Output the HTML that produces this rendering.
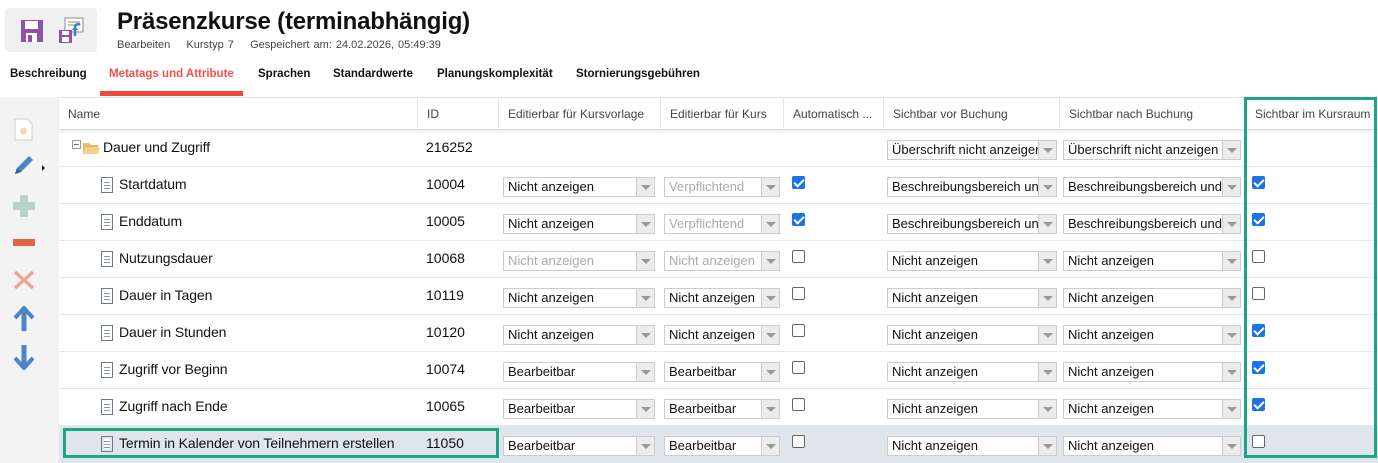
<!DOCTYPE html>
<html><head><meta charset="utf-8"><style>
*{box-sizing:border-box;margin:0;padding:0}
body{width:1378px;height:463px;overflow:hidden;background:#fff;font-family:"Liberation Sans",Arial,sans-serif;color:#111;position:relative}
.a{position:absolute}
.tb{top:8px;left:5px;width:92px;height:44px;background:#f0f0f0;border-radius:4px}
h1{position:absolute;left:117px;top:8px;font-size:24px;font-weight:bold;letter-spacing:-0.2px}
.sub{left:117px;top:39px;font-size:11px;color:#444;word-spacing:1px}
.tab{top:68px;font-size:11.5px;font-weight:bold}
.side{left:0;top:97px;width:59px;height:366px;background:#f3f3f3}
.hdr{top:97px;left:59px;width:1319px;height:33px;border-top:1px solid #e2e2e2;border-bottom:1px solid #ddd;box-shadow:0 2px 3px rgba(0,0,0,.08)}
.hc{position:absolute;top:0;height:32px;line-height:32px;font-size:12px;color:#444;padding-left:9px;border-left:1px solid #e6e6e6}
.row{left:59px;width:1319px;height:37px;border-bottom:1px solid #e8e8e8}
.nm{position:absolute;font-size:14px;top:9px;letter-spacing:-0.1px}
.id{position:absolute;left:367px;top:9px;font-size:14px}
.sel{position:absolute;top:10px;height:20px;border:1px solid #ccc;background:#fff;font-size:13px;line-height:18px;padding-left:4px;white-space:nowrap;overflow:hidden}
.sel i{position:absolute;right:0;top:0;width:18px;height:18px;background:#ececec;border-left:1px solid #ccc}
.sel i:after{content:"";position:absolute;left:4px;top:7px;border-left:5px solid transparent;border-right:5px solid transparent;border-top:5px solid #999}
.dis{color:#aaa}
.cb{position:absolute;top:9px;width:13px;height:13px;border:1px solid #666;border-radius:2px;background:#fff}
.cb.on{background:#1a73e8;border-color:#1a73e8}
.cb.on:after{content:"";position:absolute;left:3px;top:0px;width:4px;height:8px;border:solid #fff;border-width:0 2px 2px 0;transform:rotate(45deg)}
.doc{position:absolute;top:10px;width:12px;height:16px;border:1px solid #6b7a90;background:#fff repeating-linear-gradient(#fff 0 2px,#8a97b0 2px 3px) content-box;padding:2px 2px 2px 2px}
</style></head><body>
<div class="a tb"></div>
<svg class="a" style="left:20px;top:19px" width="24" height="24"><rect x="1" y="1" width="22" height="22" fill="#8e52a8"/><rect x="5" y="2" width="13" height="8" fill="#fff"/><rect x="6" y="14" width="11" height="9" fill="#fff"/><rect x="8" y="16" width="4" height="7" fill="#8e52a8"/></svg>
<svg class="a" style="left:58px;top:16px" width="28" height="28"><rect x="7" y="2" width="18" height="14" fill="#fff" stroke="#888"/><line x1="10" y1="6" x2="22" y2="6" stroke="#888"/><line x1="10" y1="9" x2="22" y2="9" stroke="#888"/><rect x="1" y="14" width="13" height="13" fill="#8e52a8"/><rect x="4" y="15" width="7" height="4" fill="#fff"/><rect x="4" y="21" width="7" height="5" fill="#fff"/><path d="M17 20 V11 a3 3 0 0 1 5 -2" stroke="#3d7fc6" stroke-width="2.5" fill="none"/><path d="M14 14 l3 -4 3 4z" fill="#3d7fc6"/></svg>
<h1>Präsenzkurse (terminabhängig)</h1>
<div class="a sub">Bearbeiten&nbsp;&nbsp;&nbsp;&nbsp;Kurstyp 7&nbsp;&nbsp;&nbsp;&nbsp;Gespeichert am: 24.02.2026, 05:49:39</div>
<div class="a tab" style="left:10px">Beschreibung</div>
<div class="a tab" style="left:109px;color:#f2514b">Metatags und Attribute</div>
<div class="a tab" style="left:258px">Sprachen</div>
<div class="a tab" style="left:333px">Standardwerte</div>
<div class="a tab" style="left:437px">Planungskomplexität</div>
<div class="a tab" style="left:576px">Stornierungsgebühren</div>
<div class="a" style="left:100px;top:91px;width:143px;height:5px;background:#f2473d"></div>
<div class="a side"></div>
<svg class="a" style="left:14px;top:118px" width="20" height="24"><path d="M1 1h12l5 5v16H1z" fill="#fff" stroke="#ccc"/><circle cx="9.5" cy="13" r="3.5" fill="#f3d9a8"/></svg>
<svg class="a" style="left:12px;top:155px" width="36" height="24"><path d="M3 19 l2 -6 L17 1 l4 4 L9 17z" fill="#4a86c5"/><path d="M3 19 l2-6 4 4z" fill="#2d5b8f"/><path d="M30 10 l3 3 -3 3z" fill="#222"/></svg>
<div class="a" style="left:20px;top:195px;width:8px;height:22px;background:#b3d4c6"></div>
<div class="a" style="left:13px;top:202px;width:22px;height:8px;background:#b3d4c6"></div>
<div class="a" style="left:13px;top:239px;width:22px;height:7px;background:#dd6447"></div>
<svg class="a" style="left:13px;top:270px" width="22" height="20"><path d="M2 2 L20 18 M20 2 L2 18" stroke="#eaa596" stroke-width="3.5"/></svg>
<svg class="a" style="left:14px;top:306px" width="20" height="26"><path d="M10 3 V25" stroke="#4a86c5" stroke-width="5"/><path d="M1 12 L10 2 19 12" stroke="#4a86c5" stroke-width="4" fill="none"/></svg>
<svg class="a" style="left:14px;top:344px" width="20" height="26"><path d="M10 1 V23" stroke="#4a86c5" stroke-width="5"/><path d="M1 14 L10 24 19 14" stroke="#4a86c5" stroke-width="4" fill="none"/></svg>

<div class="a hdr">
<div class="hc" style="left:0;border:0">Name</div>
<div class="hc" style="left:358px">ID</div>
<div class="hc" style="left:439px">Editierbar für Kursvorlage</div>
<div class="hc" style="left:601px">Editierbar für Kurs</div>
<div class="hc" style="left:724px">Automatisch ...</div>
<div class="hc" style="left:824px">Sichtbar vor Buchung</div>
<div class="hc" style="left:1000px">Sichtbar nach Buchung</div>
<div class="hc" style="left:1186px">Sichtbar im Kursraum</div>
</div>

<div class="a row" style="top:130px">
<div class="a" style="left:13px;top:10px;width:9px;height:9px;border:1px solid #999"></div><div class="a" style="left:15px;top:14px;width:5px;height:1px;background:#777"></div>
<svg class="a" style="left:24px;top:11px" width="17" height="14"><path d="M0 2h6l2 2h7v9H0z" fill="#e5b769"/><path d="M2 6h15l-2 7H0z" fill="#f3d08e"/></svg>
<div class="nm" style="left:44px">Dauer und Zugriff</div><div class="id">216252</div>
<div class="sel" style="left:828px;width:170px">Überschrift nicht anzeigen<i></i></div>
<div class="sel" style="left:1004px;width:178px">Überschrift nicht anzeigen<i></i></div>
</div>

<div class="a row" style="top:167px"><div class="doc" style="left:42px"></div><div class="nm" style="left:60px">Startdatum</div><div class="id">10004</div>
<div class="sel" style="left:444px;width:152px">Nicht anzeigen<i></i></div><div class="sel dis" style="left:605px;width:116px">Verpflichtend<i></i></div><div class="cb on" style="left:733px"></div>
<div class="sel" style="left:828px;width:170px">Beschreibungsbereich und<i></i></div><div class="sel" style="left:1004px;width:178px">Beschreibungsbereich und<i></i></div><div class="cb on" style="left:1193px"></div></div>

<div class="a row" style="top:204px"><div class="doc" style="left:42px"></div><div class="nm" style="left:60px">Enddatum</div><div class="id">10005</div>
<div class="sel" style="left:444px;width:152px">Nicht anzeigen<i></i></div><div class="sel dis" style="left:605px;width:116px">Verpflichtend<i></i></div><div class="cb on" style="left:733px"></div>
<div class="sel" style="left:828px;width:170px">Beschreibungsbereich und<i></i></div><div class="sel" style="left:1004px;width:178px">Beschreibungsbereich und<i></i></div><div class="cb on" style="left:1193px"></div></div>

<div class="a row" style="top:241px"><div class="doc" style="left:42px"></div><div class="nm" style="left:60px">Nutzungsdauer</div><div class="id">10068</div>
<div class="sel dis" style="left:444px;width:152px">Nicht anzeigen<i></i></div><div class="sel dis" style="left:605px;width:116px">Nicht anzeigen<i></i></div><div class="cb" style="left:733px"></div>
<div class="sel" style="left:828px;width:170px">Nicht anzeigen<i></i></div><div class="sel" style="left:1004px;width:178px">Nicht anzeigen<i></i></div><div class="cb" style="left:1193px"></div></div>

<div class="a row" style="top:278px"><div class="doc" style="left:42px"></div><div class="nm" style="left:60px">Dauer in Tagen</div><div class="id">10119</div>
<div class="sel" style="left:444px;width:152px">Nicht anzeigen<i></i></div><div class="sel" style="left:605px;width:116px">Nicht anzeigen<i></i></div><div class="cb" style="left:733px"></div>
<div class="sel" style="left:828px;width:170px">Nicht anzeigen<i></i></div><div class="sel" style="left:1004px;width:178px">Nicht anzeigen<i></i></div><div class="cb" style="left:1193px"></div></div>

<div class="a row" style="top:315px"><div class="doc" style="left:42px"></div><div class="nm" style="left:60px">Dauer in Stunden</div><div class="id">10120</div>
<div class="sel" style="left:444px;width:152px">Nicht anzeigen<i></i></div><div class="sel" style="left:605px;width:116px">Nicht anzeigen<i></i></div><div class="cb" style="left:733px"></div>
<div class="sel" style="left:828px;width:170px">Nicht anzeigen<i></i></div><div class="sel" style="left:1004px;width:178px">Nicht anzeigen<i></i></div><div class="cb on" style="left:1193px"></div></div>

<div class="a row" style="top:352px"><div class="doc" style="left:42px"></div><div class="nm" style="left:60px">Zugriff vor Beginn</div><div class="id">10074</div>
<div class="sel" style="left:444px;width:152px">Bearbeitbar<i></i></div><div class="sel" style="left:605px;width:116px">Bearbeitbar<i></i></div><div class="cb" style="left:733px"></div>
<div class="sel" style="left:828px;width:170px">Nicht anzeigen<i></i></div><div class="sel" style="left:1004px;width:178px">Nicht anzeigen<i></i></div><div class="cb on" style="left:1193px"></div></div>

<div class="a row" style="top:389px"><div class="doc" style="left:42px"></div><div class="nm" style="left:60px">Zugriff nach Ende</div><div class="id">10065</div>
<div class="sel" style="left:444px;width:152px">Bearbeitbar<i></i></div><div class="sel" style="left:605px;width:116px">Bearbeitbar<i></i></div><div class="cb" style="left:733px"></div>
<div class="sel" style="left:828px;width:170px">Nicht anzeigen<i></i></div><div class="sel" style="left:1004px;width:178px">Nicht anzeigen<i></i></div><div class="cb on" style="left:1193px"></div></div>

<div class="a row" style="top:426px;background:#dfe5ea;border:0"><div class="doc" style="left:42px"></div><div class="nm" style="left:60px">Termin in Kalender von Teilnehmern erstellen</div><div class="id">11050</div>
<div class="sel" style="left:444px;width:152px">Bearbeitbar<i></i></div><div class="sel" style="left:605px;width:116px">Bearbeitbar<i></i></div><div class="cb" style="left:733px"></div>
<div class="sel" style="left:828px;width:170px">Nicht anzeigen<i></i></div><div class="sel" style="left:1004px;width:178px">Nicht anzeigen<i></i></div><div class="cb" style="left:1193px"></div></div>

<div class="a" style="left:1244px;top:97px;width:133px;height:361px;border:3px solid #1aa585"></div>
<div class="a" style="left:63px;top:428px;width:436px;height:30px;border:3px solid #1aa585"></div>
</body></html>
